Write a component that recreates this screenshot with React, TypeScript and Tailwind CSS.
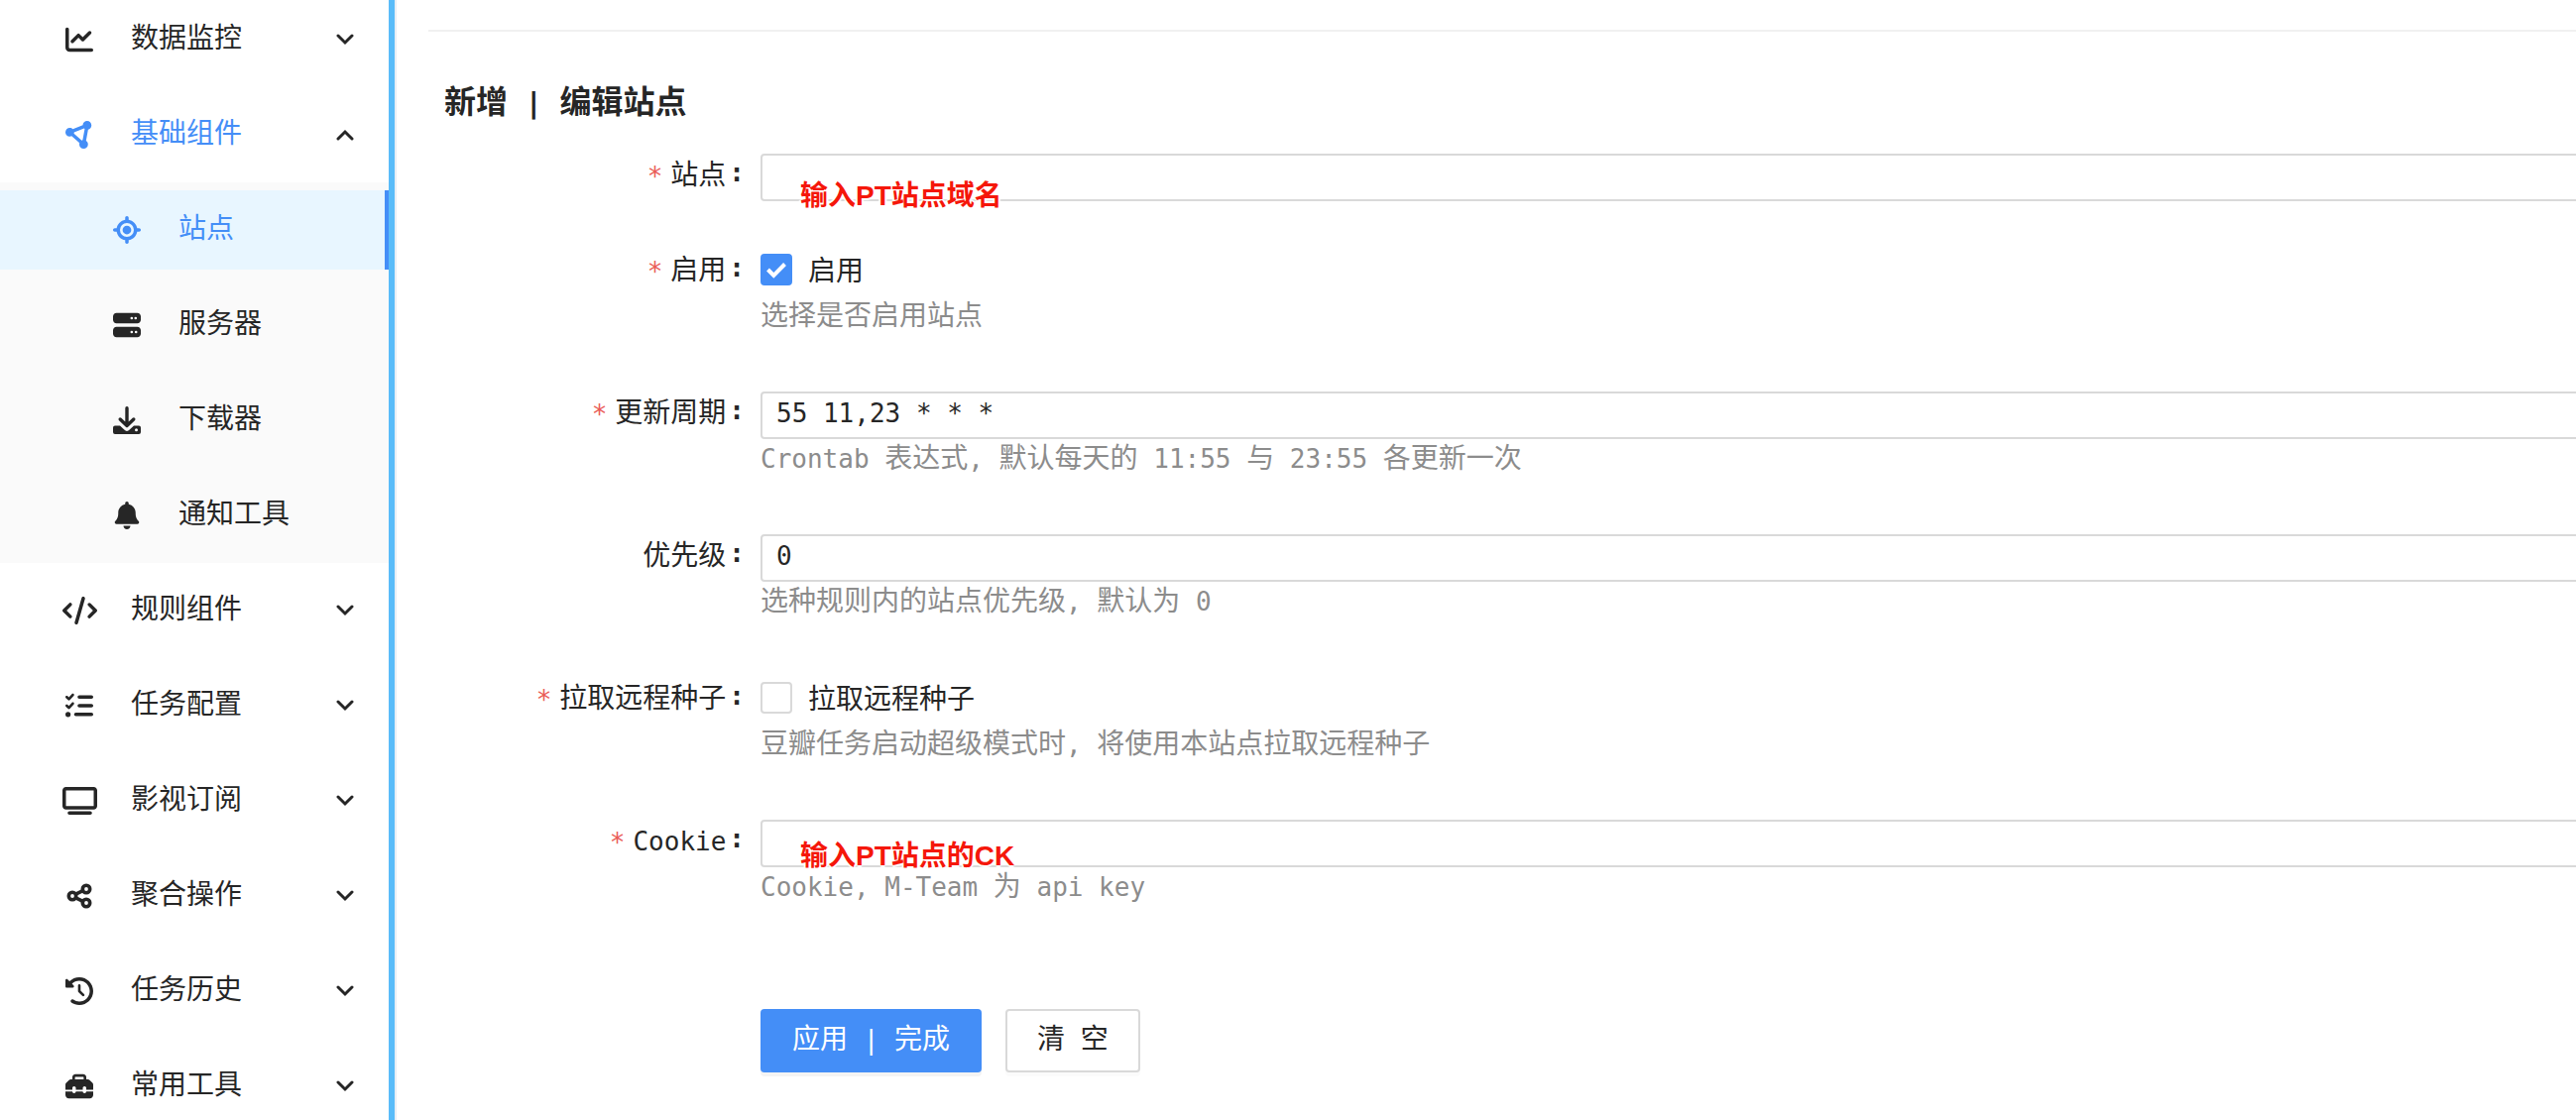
import clsx from 'clsx'
import { useState } from 'react'
import type { ComponentType, ReactNode } from 'react'
import {
  FaBell,
  FaChartLine,
  FaCircleNodes,
  FaClockRotateLeft,
  FaCode,
  FaListCheck,
  FaLocationCrosshairs,
  FaServer,
  FaToolbox,
  FaTv,
} from 'react-icons/fa6'

type IconType = ComponentType<{ className?: string }>

type MenuEntry = {
  label: string
  icon: IconType
  /** Icons drawn on a 5:4 canvas instead of a square one. */
  wide?: boolean
  children?: MenuEntry[]
}

const DownloaderIcon: IconType = ({ className }) => (
  <svg viewBox="0 0 28 28" className={className} aria-hidden="true">
    <path
      d="M14 1.700v17M7.200 13l6.800 6.500 6.800-6.500"
      fill="none"
      stroke="currentColor"
      strokeWidth="3.4"
      strokeLinecap="round"
      strokeLinejoin="round"
    />
    <path
      fill="currentColor"
      fillRule="evenodd"
      d="M2 19.500h5l4.300 4.100a3.900 3.900 0 0 0 5.400 0L21 19.500H26a2 2 0 0 1 2 2V26a2 2 0 0 1-2 2H2a2 2 0 0 1-2-2v-4.500a2 2 0 0 1 2-2ZM23.500 22.300a1.500 1.500 0 1 0 0 3a1.500 1.500 0 0 0 0-3Z"
    />
  </svg>
)

const ShareIcon: IconType = ({ className }) => (
  <svg viewBox="0 0 28 28" className={className} aria-hidden="true">
    <g fill="none" stroke="currentColor" strokeWidth="3.6">
      <circle cx="7" cy="14" r="3.700" />
      <circle cx="21" cy="7" r="3.700" />
      <circle cx="21" cy="21" r="3.700" />
      <path d="M10 12.300l7.600-3.700M10 15.700l7.600 3.700" />
    </g>
  </svg>
)

const Chevron = ({ open }: { open?: boolean }) => (
  <svg viewBox="0 0 18 12" className="h-3 w-[18px] text-[#262626]" aria-hidden="true">
    <path
      d={open ? 'M2 10l7-7 7 7' : 'M2 2l7 7 7-7'}
      fill="none"
      stroke="currentColor"
      strokeWidth="3"
      strokeLinecap="round"
    />
  </svg>
)

const MENU: MenuEntry[] = [
  { label: '数据监控', icon: FaChartLine },
  {
    label: '基础组件',
    icon: FaCircleNodes,
    children: [
      { label: '站点', icon: FaLocationCrosshairs },
      { label: '服务器', icon: FaServer },
      { label: '下载器', icon: DownloaderIcon },
      { label: '通知工具', icon: FaBell },
    ],
  },
  { label: '规则组件', icon: FaCode, wide: true },
  { label: '任务配置', icon: FaListCheck },
  { label: '影视订阅', icon: FaTv, wide: true },
  { label: '聚合操作', icon: ShareIcon },
  { label: '任务历史', icon: FaClockRotateLeft },
  { label: '常用工具', icon: FaToolbox },
]

/** Latin runs are set in the code font, a step smaller than the Chinese around them. */
const Mixed = ({ text }: { text: string }) => (
  <>
    {text.split(/([\x20-\x7e]+)/).map((part, i) =>
      i % 2 ? (
        <span key={i} className="font-['DejaVu_Sans_Mono',monospace] text-[26px] leading-none whitespace-pre">
          {part}
        </span>
      ) : (
        part
      )
    )}
  </>
)

const Sidebar = () => {
  const [openMenu, setOpenMenu] = useState('基础组件')
  const [active, setActive] = useState('站点')

  return (
    <nav className="w-[400px] shrink-0 border-r-2 border-[#e8eef5]">
      <ul className="min-h-screen border-r-6 border-[#5abcf9]">
        {MENU.map(({ label, icon: Icon, wide, children }) => {
          const open = openMenu === label
          return (
            <li key={label} className="mb-4">
              <button
                type="button"
                aria-expanded={open}
                onClick={() => setOpenMenu(open ? '' : label)}
                className={clsx('flex h-20 w-full items-center pr-[35px] pl-15', open ? 'text-[#448ef7]' : 'text-[#262626]')}
              >
                <span className="flex w-10 justify-center">
                  <Icon className={wide ? 'h-7 w-[35px]' : 'size-7'} />
                </span>
                <span className="ml-8 flex-1 pb-2 text-left">{label}</span>
                <Chevron open={open} />
              </button>
              {open && children ? (
                <ul className="mt-2 -mb-2 flex flex-col gap-4 bg-[#fafafa] py-2">
                  {children.map(({ label: childLabel, icon: ChildIcon }) => (
                    <li key={childLabel}>
                      <a
                        href="#"
                        onClick={() => setActive(childLabel)}
                        className={clsx(
                          'flex h-20 items-center border-r-4 pl-27',
                          active === childLabel
                            ? 'border-[#448ef7] bg-[#e8f6ff] text-[#448ef7]'
                            : 'border-transparent text-[#262626]'
                        )}
                      >
                        <span className="flex w-10 justify-center">
                          <ChildIcon className="size-7" />
                        </span>
                        <span className="ml-8 pb-2">{childLabel}</span>
                      </a>
                    </li>
                  ))}
                </ul>
              ) : null}
            </li>
          )
        })}
      </ul>
    </nav>
  )
}

type FieldProps = {
  id: string
  label: string
  required?: boolean
  hint?: string
  children: ReactNode
}

const Field = ({ id, label, required, hint, children }: FieldProps) => (
  <div className="mb-12 flex">
    <label htmlFor={id} className="flex h-12 w-[335px] shrink-0 items-center justify-end pr-4 pb-2">
      {required ? (
        <span className="mr-2 pt-2 font-['DejaVu_Sans_Mono',monospace] text-[26px] text-[#ea5c57]">*</span>
      ) : null}
      <span>
        <Mixed text={label} />
      </span>
      <span className="ml-[3px] font-['DejaVu_Sans_Mono',monospace] text-[26px] font-bold">:</span>
    </label>
    <div className="-mr-4 min-w-0 flex-1">
      {children}
      {hint ? (
        <p className="h-12 leading-9 text-[#8c8c8c]">
          <Mixed text={hint} />
        </p>
      ) : null}
    </div>
  </div>
)

type TextBoxProps = {
  id: string
  defaultValue?: string
  note?: string
  noteClassName?: string
}

const TextBox = ({ id, defaultValue, note, noteClassName }: TextBoxProps) => (
  <div className="relative h-12">
    <input
      id={id}
      type="text"
      defaultValue={defaultValue}
      className="h-12 w-full rounded-sm border-2 border-[#d9d9d9] bg-white px-3.5 pb-1 font-['DejaVu_Sans_Mono',monospace] text-[26px] outline-none focus:border-[#448ef7]"
    />
    {note ? (
      <span
        className={clsx(
          "pointer-events-none absolute left-10 block leading-7 font-bold whitespace-nowrap text-[#f5170a] font-['Liberation_Sans','Noto_Sans_CJK_SC',sans-serif] [text-shadow:2px_0_1px_#fff,-2px_0_1px_#fff,0_2px_1px_#fff,0_-2px_1px_#fff]",
          noteClassName
        )}
      >
        {note}
      </span>
    ) : null}
  </div>
)

const CheckBox = ({ id, label, defaultChecked }: { id: string; label: string; defaultChecked?: boolean }) => (
  <div className="flex h-12 items-start pt-1.5">
    <span className="relative size-8">
      <input
        id={id}
        type="checkbox"
        defaultChecked={defaultChecked}
        className="peer block size-8 appearance-none rounded-sm border-2 border-[#d9d9d9] bg-white checked:border-[#448ef7] checked:bg-[#448ef7]"
      />
      <svg
        viewBox="0 0 32 32"
        className="pointer-events-none absolute inset-0 hidden size-8 peer-checked:block"
        aria-hidden="true"
      >
        <path d="M7.500 16l5.800 6L24.500 10.500" fill="none" stroke="#fff" strokeWidth="4" />
      </svg>
    </span>
    <label htmlFor={id} className="pl-4 leading-[30px]">
      {label}
    </label>
  </div>
)

export default function App() {
  return (
    <div className="flex h-screen overflow-hidden bg-white font-['Noto_Sans_CJK_SC',sans-serif] text-[28px] leading-10 text-[#262626]">
      <Sidebar />
      <main className="min-w-0 flex-1 pt-[30px] pl-8">
        <hr className="border-t-2 border-[#f0f0f0]" />
        <form onSubmit={(e) => e.preventDefault()}>
          <h1 className="mt-11 mb-[30px] pl-4 text-[32px] leading-12 font-bold">
            新增
            <span className="font-['DejaVu_Sans_Mono',monospace] text-[29px] leading-none whitespace-pre"> | </span>
            编辑站点
          </h1>
          <Field id="site" label="站点" required>
            <TextBox id="site" note="输入PT站点域名" noteClassName="top-[30px]" />
          </Field>
          <Field id="enabled" label="启用" required hint="选择是否启用站点">
            <CheckBox id="enabled" label="启用" defaultChecked />
          </Field>
          <Field id="cron" label="更新周期" required hint="Crontab 表达式, 默认每天的 11:55 与 23:55 各更新一次">
            <TextBox id="cron" defaultValue="55 11,23 * * *" />
          </Field>
          <Field id="priority" label="优先级" hint="选种规则内的站点优先级, 默认为 0">
            <TextBox id="priority" defaultValue="0" />
          </Field>
          <Field id="remote" label="拉取远程种子" required hint="豆瓣任务启动超级模式时, 将使用本站点拉取远程种子">
            <CheckBox id="remote" label="拉取远程种子" />
          </Field>
          <Field id="cookie" label="Cookie" required hint="Cookie, M-Team 为 api key">
            <TextBox id="cookie" note="输入PT站点的CK" noteClassName="top-6" />
          </Field>
          <div className="mt-24 flex gap-6 pl-[335px]">
            <button
              type="submit"
              className="h-16 rounded-sm bg-[#448ef7] px-8 pb-2 text-white shadow-[0_4px_0_rgba(0,0,0,0.045)]"
            >
              <Mixed text="应用 | 完成" />
            </button>
            <button
              type="reset"
              className="h-16 rounded-sm border-2 border-[#d9d9d9] bg-white px-[30px] pb-2 shadow-[0_4px_0_rgba(0,0,0,0.015)]"
            >
              <Mixed text="清 空" />
            </button>
          </div>
        </form>
      </main>
    </div>
  )
}
